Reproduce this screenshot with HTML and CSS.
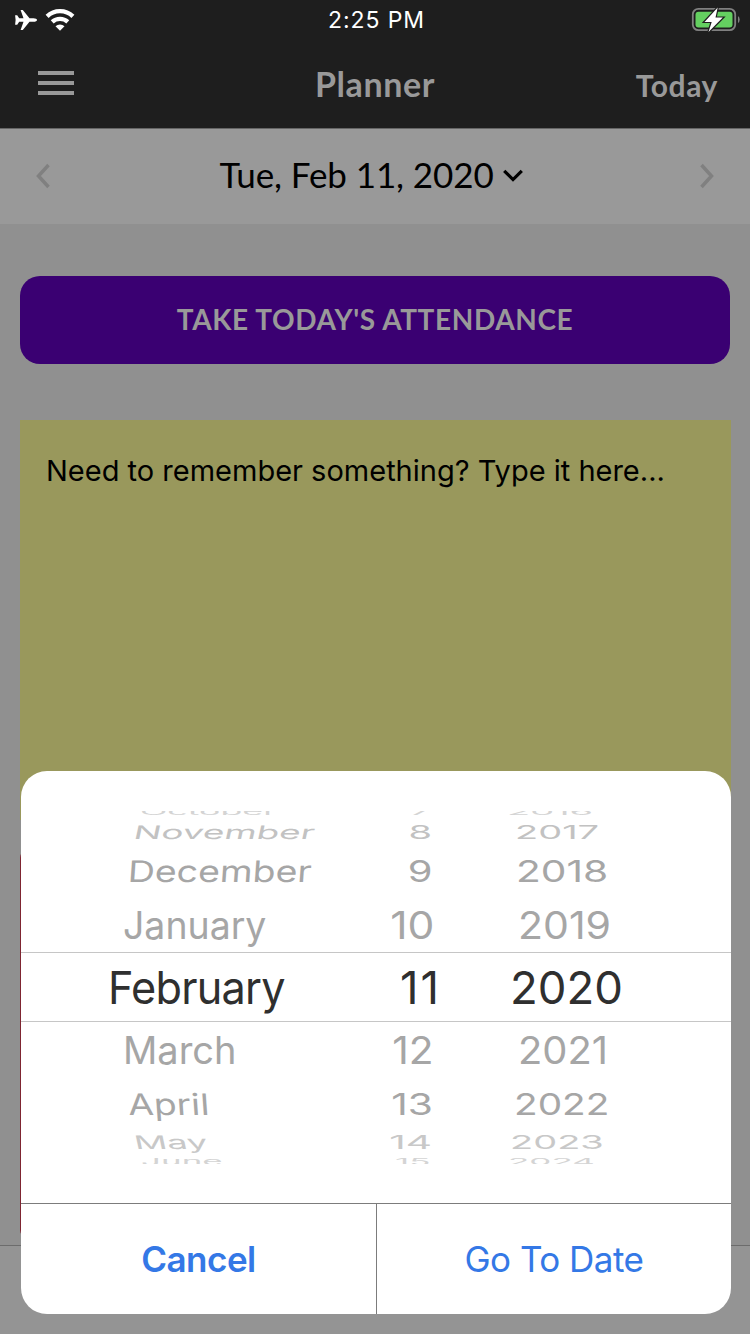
FILE: index.html
```html
<!DOCTYPE html>
<html lang="en">

<head>
    <meta charset="UTF-8">
    <meta name="viewport" content="width=device-width, initial-scale=1.0">
    <title>Planner</title>
    <link rel="stylesheet" href="styles.css">
</head>

<body>
    <header class="header">
        <div class="status-bar">
            <div class="status-left">
                <svg width="24" height="22" viewBox="0 0 24 22">
                    <path fill="#fff" d="M23 11c0-1.100-1.500-1.800-3.500-1.800h-4L8.800 0.900H6.600l2.900 8.300H5.200L3.200 6.200H1.100L1.600 11l-.5 4.800h2.100l2-3h4.300l-2.900 8.300h2.200l6.700-8.300h4c2 0 3.500-.7 3.500-1.800z" />
                </svg>
                <svg width="30" height="22" viewBox="0 0 30 22">
                    <g fill="none" stroke="#fff" stroke-width="4.300">
                        <path d="M2.100 7.400a18.500 18.500 0 0 1 25.800 0" />
                        <path d="M7.200 12.900a11.500 11.500 0 0 1 15.600 0" />
                    </g>
                    <path fill="#fff" d="M15 21.800l-4.500-4.600a6.600 6.600 0 0 1 9 0z" />
                </svg>
            </div>
            <div class="status-time">2:25 PM</div>
            <svg class="battery" width="50" height="26" viewBox="0 0 50 26">
                <rect x="2.800" y="2.900" width="42.400" height="21.200" rx="5.500" fill="none" stroke="#808080" stroke-width="1.800" />
                <path d="M48 10v7q1.700-1 1.700-3.500T48 10z" fill="#808080" />
                <rect x="5.500" y="5.700" width="37" height="15.800" rx="3" fill="#64d060" />
                <path d="M27.700 1.500L14.500 15.900h7.200L18.500 26 32.800 11.600h-7.300z" fill="#fff" stroke="#1e1e1e" stroke-width="2.400" paint-order="stroke" />
            </svg>
        </div>
        <div class="nav">
            <div class="menu">
                <span></span>
                <span></span>
                <span></span>
            </div>
            <div class="title">Planner</div>
            <div class="today">Today</div>
        </div>
    </header>

    <div class="date-bar">
        <svg width="16" height="26" viewBox="0 0 16 26">
            <path d="M13.500 2L3.500 13l10 11" fill="none" stroke="#808080" stroke-width="3.500" />
        </svg>
        <div class="date">
            <span class="date-text">Tue, Feb 11, 2020</span>
            <svg width="20" height="14" viewBox="0 0 20 14">
                <path d="M1.200 1.800L10 10.600l8.800-8.800" fill="none" stroke="#000" stroke-width="3.200" />
            </svg>
        </div>
        <svg width="16" height="26" viewBox="0 0 16 26">
            <path d="M2.500 2l10 11-10 11" fill="none" stroke="#808080" stroke-width="3.500" />
        </svg>
    </div>

    <main class="content">
        <div class="attendance"><span>TAKE TODAY'S ATTENDANCE</span></div>
        <div class="note"><span>Need to remember something? Type it here...</span></div>
        <div class="card"></div>
    </main>
    <footer class="tab-bar"></footer>

    <div class="sheet">
        <div class="wheel">
            <div class="row up4"><span class="month">October</span><span class="day">7</span><span class="year">2016</span></div>
            <div class="row up3"><span class="month">November</span><span class="day">8</span><span class="year">2017</span></div>
            <div class="row up2"><span class="month">December</span><span class="day">9</span><span class="year">2018</span></div>
            <div class="row up1"><span class="month">January</span><span class="day">10</span><span class="year">2019</span></div>
            <div class="row selected"><span class="month">February</span><span class="day">11</span><span class="year">2020</span></div>
            <div class="row down1"><span class="month">March</span><span class="day">12</span><span class="year">2021</span></div>
            <div class="row down2"><span class="month">April</span><span class="day">13</span><span class="year">2022</span></div>
            <div class="row down3"><span class="month">May</span><span class="day">14</span><span class="year">2023</span></div>
            <div class="row down4"><span class="month">June</span><span class="day">15</span><span class="year">2024</span></div>
        </div>
        <div class="actions">
            <div class="action cancel"><span>Cancel</span></div>
            <div class="action go"><span>Go To Date</span></div>
        </div>
    </div>
</body>

</html>
```
FILE: styles.css
```css
* {
    box-sizing: border-box;
}

body {
    margin: 0;
    width: 750px;
    height: 1334px;
    position: relative;
    overflow: hidden;
    display: flex;
    flex-direction: column;
    background-color: #909090;
    font-family: Inter, "Liberation Sans", sans-serif;
    color: #000;
}

svg {
    display: block;
    flex: none;
}

.header {
    height: 129px;
    background-color: #1e1e1e;
    border-bottom: 1px solid #666;
}

.status-bar {
    height: 40px;
    padding: 0 0 0 14px;
    display: grid;
    grid-template-columns: 200px 1fr 60px;
    align-items: center;
}

.status-left {
    display: flex;
    gap: 7px;
    padding-bottom: 1px;
}

.status-time {
    color: #fff;
    font-size: 23px;
    letter-spacing: 0.9px;
    padding-left: 114px;
}

.battery {
    margin: 0 0 3px 0;
}

.nav {
    height: 88px;
    padding: 0 32px;
    display: grid;
    grid-template-columns: 1fr auto 1fr;
    align-items: center;
    font-family: Lato, sans-serif;
    font-weight: bold;
    color: #999;
}

.menu {
    display: flex;
    flex-direction: column;
    gap: 6px;
    padding: 0 0 2px 6px;
}

.menu span {
    width: 36px;
    height: 4px;
    background-color: #999;
}

.title {
    font-size: 34px;
    letter-spacing: 0.6px;
    padding-bottom: 2px;
}

.today {
    font-size: 30px;
    letter-spacing: 0.6px;
    text-align: right;
    padding-top: 1px;
}

.date-bar {
    height: 95px;
    padding: 0 35px 2px;
    display: flex;
    align-items: center;
    justify-content: space-between;
    background-color: #999;
}

.date {
    display: flex;
    align-items: center;
    gap: 9px;
    padding-right: 8px;
    font-family: Lato, sans-serif;
    font-size: 35px;
    letter-spacing: -0.1px;
}

.date-text {
    padding-bottom: 4px;
}

.content {
    padding: 52px 20px 0;
}

.attendance {
    height: 88px;
    padding-bottom: 2px;
    border-radius: 20px;
    background-color: #3a0072;
    color: #999;
    display: flex;
    align-items: center;
    justify-content: center;
    font-family: Lato, sans-serif;
    font-size: 28px;
    font-weight: bold;
    letter-spacing: 0.6px;
}

.note {
    margin-top: 56px;
    width: 711px;
    height: 400px;
    padding: 32px 26px;
    background-color: #99985c;
    font-size: 29px;
    line-height: 38px;
}

.card {
    margin-top: 30px;
    height: 388px;
    border-radius: 8px;
    background-color: #7f2531;
}

.tab-bar {
    margin-top: 7px;
    height: 89px;
    background-color: #949494;
    border-top: 1px solid #6c6c6c;
}

/* date picker sheet over the planner */
.sheet {
    position: absolute;
    left: 21px;
    top: 771px;
    width: 710px;
    height: 543px;
    padding-top: 40px;
    border-radius: 26px;
    background-color: #fff;
    overflow: hidden;
}

.wheel {
    height: 353px;
    overflow: hidden;
}

.row {
    display: grid;
    grid-template-columns: 330px 90px 1fr;
    align-items: center;
    font-size: 38px;
    line-height: 46px;
    color: #a6a6a6;
    white-space: nowrap;
}

.month {
    justify-self: start;
    transform-origin: 0 50%;
}

.day {
    justify-self: end;
    transform-origin: 100% 50%;
}

.year {
    justify-self: start;
    transform-origin: 0 50%;
}

.selected {
    height: 70px;
    padding-top: 1px;
    font-size: 45.500px;
    color: #2f2f2f;
    border-top: 1px solid #c6c6c6;
    border-bottom: 1px solid #c6c6c6;
}

.selected .month {
    margin-left: 87px;
    letter-spacing: -0.8px;
    transform: scaleX(0.950);
}

.selected .day {
    letter-spacing: 2px;
}

.selected .year {
    margin-left: 69px;
}

/* rows get flatter and paler towards both ends of the wheel */
.up1 { height: 54px; }
.up1 .month { margin-left: 102px; transform: scaleX(0.985); }
.up1 .day { margin-right: 7px; transform: scaleX(1.120); }
.up1 .year { margin-left: 77px; transform: scaleX(1.080); }

.up2 { height: 55px; }
.up2 .month { margin-left: 107px; transform: skewX(-4deg) scale(0.985, 0.780); }
.up2 .day { margin-right: 8px; transform: scale(1.050, 0.780); }
.up2 .year { margin-left: 75px; transform: scale(1.070, 0.780); }

.up3 { height: 22px; line-height: 22px; color: #c2c2c2; }
.up3 .month { margin-left: 113px; transform: skewX(-12deg) scale(0.970, 0.490); }
.up3 .day { margin-right: 9px; transform: scale(1, 0.490); }
.up3 .year { margin-left: 74px; transform: scale(1, 0.490); }

.up4 { height: 10px; line-height: 10px; color: #d4d4d4; }
.up4 span { transform: translateY(-5px) scale(1, 0.250); }
.up4 .month { margin-left: 119px; transform: translateY(-5px) scale(0.940, 0.250); }
.up4 .day { margin-right: 10px; }
.up4 .year { margin-left: 66px; }

.down1 { height: 56px; }
.down1 .month { margin-left: 102px; }
.down1 .day { margin-right: 7px; transform: scaleX(1.070); }
.down1 .year { margin-left: 77px; transform: scaleX(1.050); }

.down2 { height: 52px; }
.down2 .month { margin-left: 107px; transform: skewX(4deg) scale(0.980, 0.780); }
.down2 .day { margin-right: 8px; transform: scale(1.070, 0.780); }
.down2 .year { margin-left: 73px; transform: scale(1.020, 0.780); }

.down3 { height: 25px; line-height: 25px; color: #c8c8c8; }
.down3 .month { margin-left: 113px; transform: skewX(12deg) scale(0.960, 0.490); }
.down3 .day { margin-right: 9px; transform: scale(1.070, 0.490); }
.down3 .year { margin-left: 69px; transform: scale(1, 0.490); }

.down4 { height: 9px; line-height: 9px; color: #d4d4d4; }
.down4 span { transform: translateY(2px) scale(0.920, 0.250); }
.down4 .month { margin-left: 120px; }
.down4 .day { margin-right: 10px; }
.down4 .year { margin-left: 67px; }

.actions {
    margin-top: 39px;
    height: 111px;
    display: grid;
    grid-template-columns: 355px 355px;
    border-top: 1px solid #7c7c7c;
}

.action {
    display: flex;
    align-items: center;
    justify-content: center;
    font-size: 35px;
    color: #3478e6;
}

.cancel {
    font-weight: 600;
    letter-spacing: -0.5px;
}

.go {
    border-left: 1px solid #7c7c7c;
    letter-spacing: -0.5px;
}
```
